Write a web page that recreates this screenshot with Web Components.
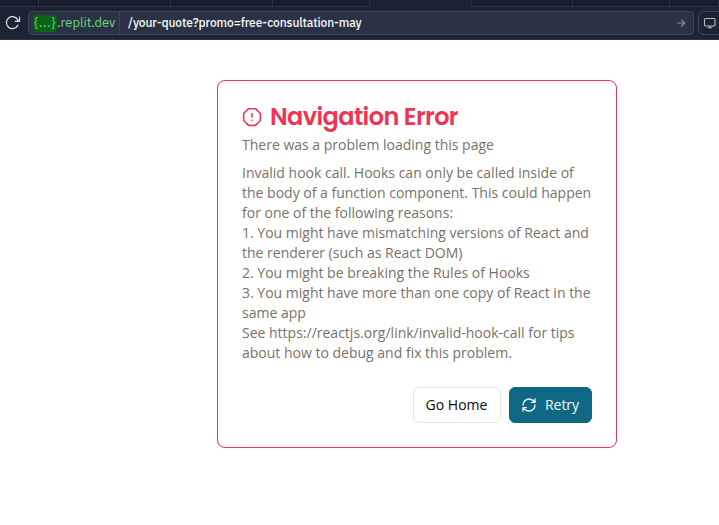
<!DOCTYPE html>
<html lang="en"><head><meta charset="utf-8"><title>Navigation Error</title>
<style>body{margin:0;background:#fff;height:525px;overflow:hidden;font-family:"Open Sans","Noto Sans",sans-serif}</style></head>
<body>
<browser-bar></browser-bar>
<error-card>
  <span slot="title">Navigation Error</span>
  <span slot="description">There was a problem loading this page</span>
  <span slot="message">Invalid hook call. Hooks can only be called inside of<br>the body of a function component. This could happen<br>for one of the following reasons:<br>1. You might have mismatching versions of React and<br>the renderer (such as React DOM)<br>2. You might be breaking the Rules of Hooks<br>3. You might have more than one copy of React in the<br>same app<br>See https://reactjs.org/link/invalid-hook-call for tips<br>about how to debug and fix this problem.</span>
  <action-button slot="actions">Go Home</action-button>
  <action-button slot="actions" variant="primary"><svg slot="icon" width="16" height="16" viewBox="0 0 24 24" fill="none" stroke="currentColor" stroke-width="2" stroke-linecap="round" stroke-linejoin="round"><path d="M3 12a9 9 0 0 1 9-9 9.75 9.75 0 0 1 6.74 2.74L21 8M21 3v5h-5M21 12a9 9 0 0 1-9 9 9.75 9.75 0 0 1-6.74-2.74L3 16M8 16H3v5"/></svg>Retry</action-button>
</error-card>
<script>
class BrowserBar extends HTMLElement{
 constructor(){super();this.attachShadow({mode:'open'}).innerHTML=`
<style>
:host{display:block;height:40px;background:#1c2333;overflow:hidden;box-sizing:border-box;border-bottom:1px solid #2b3245;font-family:"IBM Plex Sans",Roboto,"Liberation Sans",sans-serif}
*{box-sizing:border-box}
.tabs{height:7px;display:grid;grid-template-columns:39px 132px 102px 97px 102px 101px 97px 1fr}
.tabs i{background:#171d2d;border-right:1px solid #2b3245;border-bottom:1px solid #2b3245}
.tabs i.active{background:#1c2333;border-bottom:0}
.row{display:flex;width:727px;height:33px;padding:4px 0 0 4px}
.reload{width:24px;height:24px;flex:none;padding:4px 0 0}
.reload svg,.device svg,.go{display:block}
.url{width:666px;height:24px;flex:none;display:flex;background:#2b3245;border:1px solid #3c445c;border-radius:4px;line-height:22px;white-space:pre;font-weight:500}
.host{width:91px;flex:none;border-right:1px solid #3c445c;padding-left:4px;color:#6bd982;font-size:13px;font-weight:400;display:flex;align-items:center}
.sub{background:#0b6416;border-radius:4px;height:17px;width:24px;line-height:16px;text-align:center;letter-spacing:.5px}
.domain{letter-spacing:0}
.path{padding-left:8px;color:#f5f9fc;font-size:12px;letter-spacing:-.11px;flex:1}
.go{margin:4px 5px 0 0;color:#858d9c}
.device{width:40px;height:24px;flex:none;margin-left:4px;border:1px solid #3c445c;border-radius:6px;padding:4px 0 0 4px;color:#b4bac4}
</style>
<div class="tabs"><i></i><i></i><i></i><i></i><i class="active"></i><i></i><i></i><i></i></div>
<div class="row"><div class="reload"><svg width="17" height="16" viewBox="0 0 17 16" fill="none" stroke="#e1e5eb" stroke-width="1.3" stroke-linecap="round" stroke-linejoin="round"><path d="M13.8 10.2a6 6 0 1 1 .2-4.7M15.5 2.1v4.2h-4.2"/></svg></div>
<div class="url"><div class="host"><span class="sub">{...}</span><span class="domain">.replit.dev</span></div><span class="path">/your-quote?promo=free-consultation-may</span><svg class="go" width="14" height="14" viewBox="0 0 14 14" fill="none" stroke="currentColor" stroke-width="1.2" stroke-linecap="round" stroke-linejoin="round"><path d="M3.5 7h7M7.5 3.8 10.7 7l-3.2 3.2"/></svg></div>
<div class="device"><svg width="14" height="14" viewBox="0 0 14 14" fill="none" stroke="currentColor" stroke-width="1.1" stroke-linecap="round"><rect x="1.5" y="2.5" width="10.5" height="7.5" rx="1"/><path d="M6.75 10v1.8M4.8 11.8h4"/></svg></div></div>`}}
customElements.define('browser-bar',BrowserBar);
class ActionButton extends HTMLElement{
 constructor(){super();this.attachShadow({mode:'open'}).innerHTML=`
<style>:host{display:block}button{display:flex;align-items:center;justify-content:center;gap:8px;box-sizing:border-box;height:36px;width:88px;padding:0 1px 0 0;border:1px solid #e5e5e5;border-radius:6px;background:#fff;color:#0c0a09;font:500 14px/20px "Open Sans","Noto Sans",sans-serif;white-space:nowrap}
:host([variant=primary]) button{width:83px;background:#0e6883;border-color:#0e6883;color:#f8fafc}</style>
<button><slot name="icon"></slot><span><slot></slot></span></button>`}}
customElements.define('action-button',ActionButton);
class ErrorCard extends HTMLElement{
 constructor(){super();this.attachShadow({mode:'open'}).innerHTML=`
<style>
:host{display:block;box-sizing:border-box;width:400px;height:368px;margin:40px 0 0 217px;border:1px solid #ee3452;border-radius:8px;padding:24px;color:#78716c;font-size:14px;line-height:20px}
h1{display:flex;align-items:center;gap:8px;margin:0;height:24px;color:#ee3452;font:600 24px/24px Poppins,Inter,sans-serif;letter-spacing:-.6px;white-space:nowrap}
h1 svg{flex:none}
.description{margin-top:6px}.message{margin-top:8px;white-space:nowrap}
.actions{display:flex;justify-content:flex-end;gap:8px;margin-top:24px}
</style>
<h1><svg width="20" height="20" viewBox="0 0 24 24" fill="none" stroke="currentColor" stroke-width="1.9" stroke-linecap="round" stroke-linejoin="round"><path d="M7.86 2h8.28L22 7.86v8.28L16.14 22H7.86L2 16.14V7.86zM12 8v4M12 16h.01"/></svg><slot name="title"></slot></h1>
<div class="description"><slot name="description"></slot></div>
<div class="message"><slot name="message"></slot></div>
<div class="actions"><slot name="actions"></slot></div>`}}
customElements.define('error-card',ErrorCard);
</script></body></html>
